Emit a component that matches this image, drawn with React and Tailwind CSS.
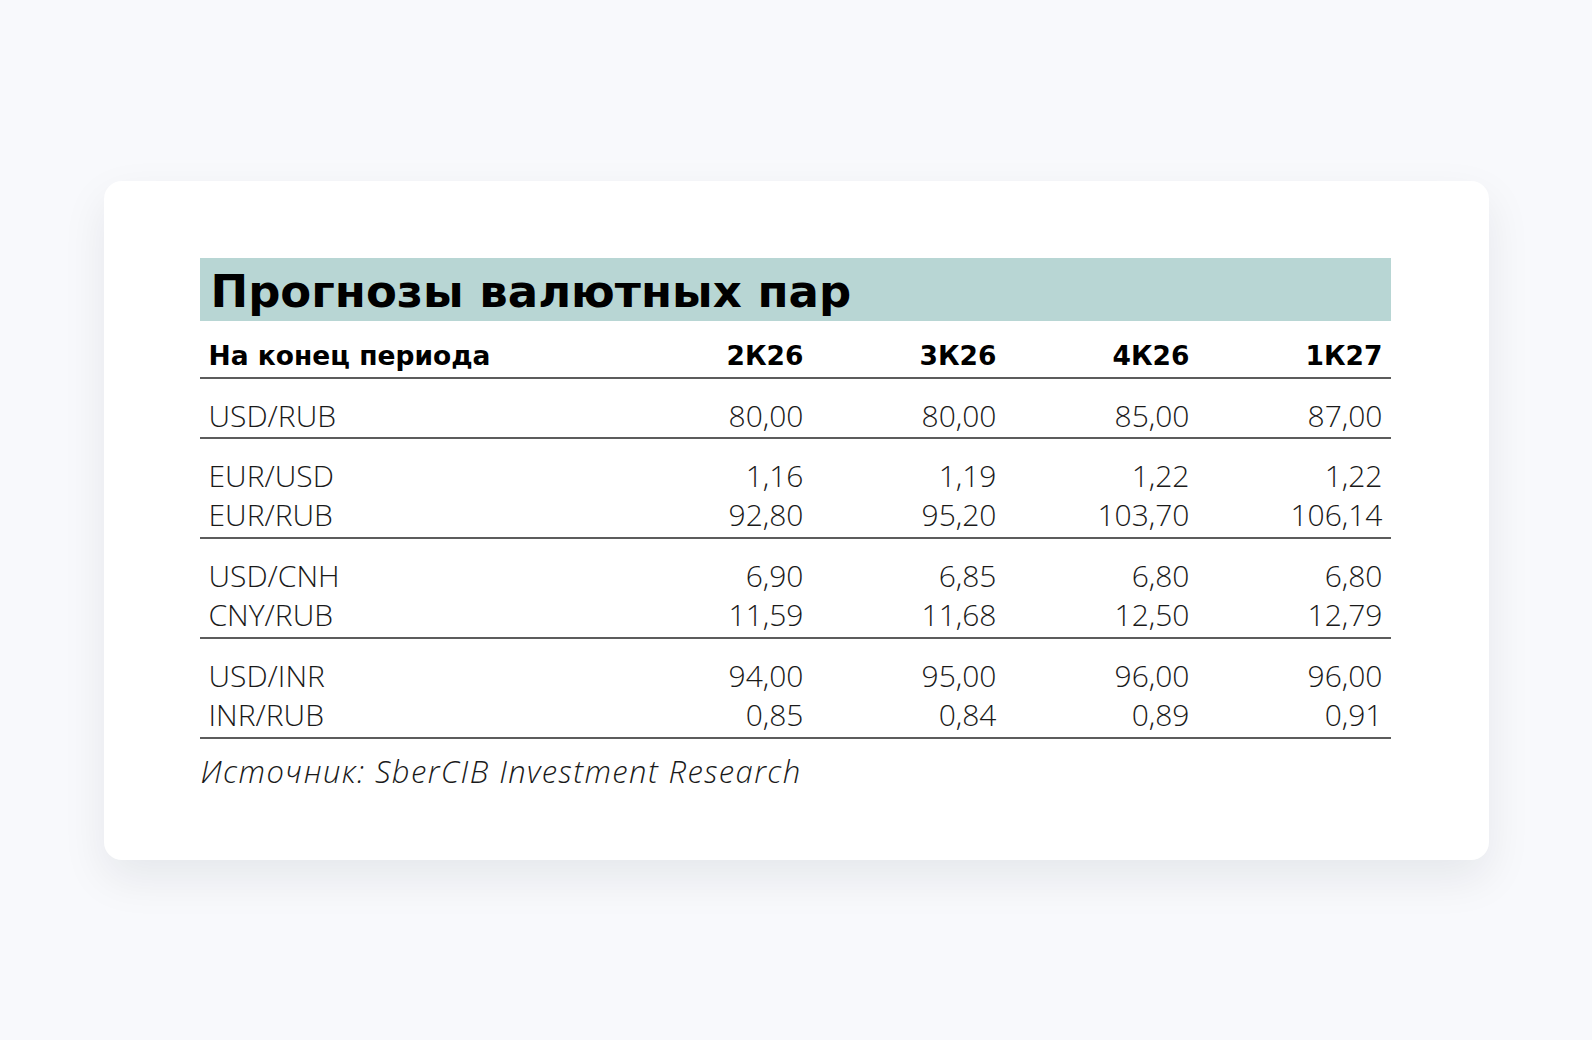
import React from "react";

const groups = [
  [["USD/RUB", "80,00", "80,00", "85,00", "87,00"]],
  [
    ["EUR/USD", "1,16", "1,19", "1,22", "1,22"],
    ["EUR/RUB", "92,80", "95,20", "103,70", "106,14"],
  ],
  [
    ["USD/CNH", "6,90", "6,85", "6,80", "6,80"],
    ["CNY/RUB", "11,59", "11,68", "12,50", "12,79"],
  ],
  [
    ["USD/INR", "94,00", "95,00", "96,00", "96,00"],
    ["INR/RUB", "0,85", "0,84", "0,89", "0,91"],
  ],
];

function Row({ cells, bold }) {
  return (
    <div className="grid grid-cols-[419px_193px_193px_193px_193px]">
      {cells.map((c, i) => (
        <div
          key={i}
          className={
            (i === 0 ? "pl-[9px] text-left " : "pr-[8px] text-right ") +
            (bold ? "font-bold text-black" : "font-light text-[#1a1a1a]")
          }
        >
          {c}
        </div>
      ))}
    </div>
  );
}

function Line() {
  return <div className="h-[2px] bg-[#5c5c5c]" />;
}

export default function App() {
  return (
    <div className="min-h-screen w-full bg-[#f8f9fc] flex items-center justify-center">
      <div className="w-[1385px] h-[679px] rounded-[18px] bg-white shadow-[0_18px_45px_rgba(15,23,42,0.08)] pt-[77px] pl-[96px] pr-[98px]">
        <div className="w-[1191px] font-['Open_Sans',sans-serif]">
          <div className="h-[63px] bg-[#b8d6d4] pl-[11px] pt-[6px] text-[45px] leading-[56px] font-bold text-black font-['DejaVu_Sans',sans-serif]">
            Прогнозы валютных пар
          </div>
          <div className="pt-[15px] pb-[1px] text-[26.5px] leading-[40px] font-['DejaVu_Sans',sans-serif]">
            <Row cells={["На конец периода", "2К26", "3К26", "4К26", "1К27"]} bold />
          </div>
          <Line />
          {groups.map((g, gi) => (
            <div key={gi}>
              <div className={"pt-[17px] text-[30px] leading-[39px] " + (gi === 0 ? "pb-[2px]" : "pb-[3px]")}>
                {g.map((r, ri) => (
                  <Row key={ri} cells={r} />
                ))}
              </div>
              <Line />
            </div>
          ))}
          <div className="pt-[12px] pl-[1px] text-[31px] leading-[40px] italic font-light tracking-[1.4px] text-[#1a1a1a]">
            Источник: SberCIB Investment Research
          </div>
        </div>
      </div>
    </div>
  );
}
